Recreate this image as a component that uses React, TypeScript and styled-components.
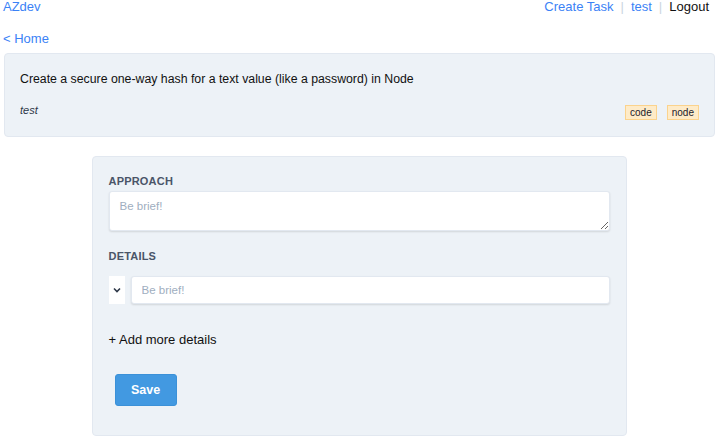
import React from "react";
import styled, { createGlobalStyle } from "styled-components";

const Global = createGlobalStyle`
  html, body { margin: 0; padding: 0; background: #fff; }
  body { font-family: "Liberation Sans", Arial, sans-serif; color: #1a202c; }
  * { box-sizing: border-box; }
`;

const Page = styled.div`
  padding: 0 4px 0 3px;
`;

const Header = styled.header`
  display: flex;
  justify-content: space-between;
  align-items: center;
  height: 14px;
  font-size: 13px;
  line-height: 14px;
`;

const Link = styled.a<{ $dark?: boolean }>`
  color: ${(p) => (p.$dark ? "#111" : "#3b82f6")};
  text-decoration: none;
  cursor: pointer;
`;

const Nav = styled.nav`
  display: flex;
  align-items: center;
  gap: 7px;
  padding-right: 6px;
`;

const Sep = styled.span`
  color: #cbd5e0;
`;

const Back = styled.div`
  margin-top: 18px;
  font-size: 13px;
  line-height: 14px;
`;

const TaskCard = styled.section`
  margin: 7px 0 0 1px;
  background: #edf2f7;
  border: 1px solid #e2e8f0;
  border-radius: 4px;
  padding: 17px 15px 15px 15px;
  height: 84px;
`;

const Title = styled.div`
  font-size: 12.3px;
  line-height: 16px;
  color: #111;
`;

const Meta = styled.div`
  display: flex;
  justify-content: space-between;
  align-items: flex-start;
  margin-top: 16px;
`;

const Author = styled.i`
  font-size: 11px;
  line-height: 14px;
  color: #2d3748;
`;

const Tags = styled.div`
  display: flex;
  gap: 10px;
  padding-top: 2px;
`;

const Tag = styled.span`
  background: #feebc8;
  border: 1px solid #fbd38d;
  font-size: 10px;
  line-height: 11px;
  padding: 1px 4px;
  color: #1a202c;
`;

const FormBox = styled.form`
  margin: 19px auto 0 auto;
  width: 535px;
  background: #edf2f7;
  border: 1px solid #e2e8f0;
  border-radius: 4px;
  padding: 18px 16px 29px 16px;
  display: flex;
  flex-direction: column;
`;

const Label = styled.label`
  font-size: 11px;
  line-height: 12px;
  font-weight: bold;
  color: #4a5568;
  text-transform: uppercase;
  letter-spacing: 0.2px;
  margin-bottom: 4px;
`;

const TextArea = styled.textarea`
  height: 40px;
  border: 1px solid #e2e8f0;
  border-radius: 3px;
  background: #fff;
  box-shadow: 0 1px 2px rgba(0, 0, 0, 0.12);
  padding: 8px 10px;
  font-family: inherit;
  font-size: 11.5px;
  resize: vertical;
  margin-bottom: 19px;
  &::placeholder { color: #a0aec0; }
`;

const Row = styled.div`
  display: flex;
  gap: 6px;
  margin-top: 10px;
`;

const SelectBox = styled.div`
  width: 16px;
  height: 28px;
  background: #fff;
  display: flex;
  align-items: center;
  justify-content: center;
`;

const Input = styled.input`
  flex: 1;
  height: 28px;
  border: 1px solid #e2e8f0;
  border-radius: 3px;
  background: #fff;
  box-shadow: 0 1px 2px rgba(0, 0, 0, 0.12);
  padding: 0 10px;
  font-family: inherit;
  font-size: 11.5px;
  &::placeholder { color: #a0aec0; }
`;

const AddMore = styled.div`
  margin-top: 28px;
  font-size: 13px;
  line-height: 16px;
  color: #111;
`;

const SaveButton = styled.button`
  margin: 26px 0 0 6px;
  width: 62px;
  height: 32px;
  background: #4299e1;
  color: #fff;
  border: 1px solid #3b91d8;
  border-radius: 3px;
  font-family: inherit;
  font-weight: bold;
  font-size: 12.5px;
  align-self: flex-start;
`;

export default function App() {
  return (
    <>
      <Global />
      <Page>
        <Header>
          <Link>AZdev</Link>
          <Nav>
            <Link>Create Task</Link>
            <Sep>|</Sep>
            <Link>test</Link>
            <Sep>|</Sep>
            <Link $dark>Logout</Link>
          </Nav>
        </Header>
        <Back>
          <Link>&lt; Home</Link>
        </Back>
        <TaskCard>
          <Title>Create a secure one-way hash for a text value (like a password) in Node</Title>
          <Meta>
            <Author>test</Author>
            <Tags>
              <Tag>code</Tag>
              <Tag>node</Tag>
            </Tags>
          </Meta>
        </TaskCard>
        <FormBox>
          <Label>Approach</Label>
          <TextArea placeholder="Be brief!" />
          <Label>Details</Label>
          <Row>
            <SelectBox>
              <svg width="8" height="6" viewBox="0 0 8 6">
                <path d="M1 1.5 L4 4.5 L7 1.5" fill="none" stroke="#2d3748" strokeWidth="1.6" />
              </svg>
            </SelectBox>
            <Input placeholder="Be brief!" />
          </Row>
          <AddMore>+ Add more details</AddMore>
          <SaveButton type="button">Save</SaveButton>
        </FormBox>
      </Page>
    </>
  );
}
